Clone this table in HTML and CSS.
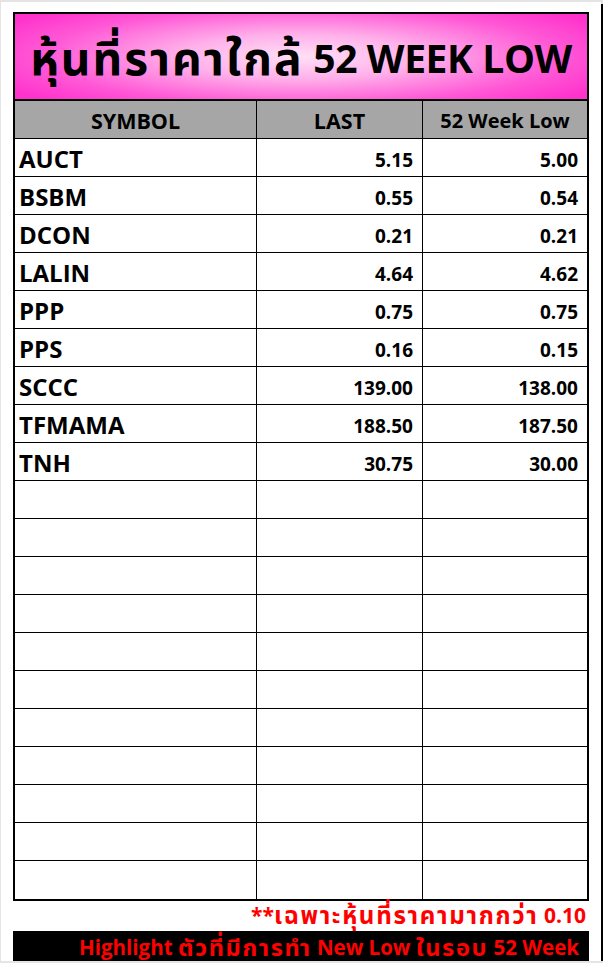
FILE: index.html
```html
<!DOCTYPE html>
<html lang="th">
<head>
<meta charset="utf-8">
<title>หุ้นที่ราคาใกล้ 52 WEEK LOW</title>
<link rel="stylesheet" href="styles.css">
</head>
<body>
<div class="canvas">
  <div class="sheet">
    <div class="title"><span class="th">หุ้นที่ราคาใกล้</span>&nbsp;52 WEEK LOW</div>
    <div class="grid">
      <div class="hd">SYMBOL</div>
      <div class="hd">LAST</div>
      <div class="hd hd-small">52 Week Low</div>

      <div class="sym">AUCT</div><div class="num">5.15</div><div class="num">5.00</div>
      <div class="sym">BSBM</div><div class="num">0.55</div><div class="num">0.54</div>
      <div class="sym">DCON</div><div class="num">0.21</div><div class="num">0.21</div>
      <div class="sym">LALIN</div><div class="num">4.64</div><div class="num">4.62</div>
      <div class="sym">PPP</div><div class="num">0.75</div><div class="num">0.75</div>
      <div class="sym">PPS</div><div class="num">0.16</div><div class="num">0.15</div>
      <div class="sym">SCCC</div><div class="num">139.00</div><div class="num">138.00</div>
      <div class="sym">TFMAMA</div><div class="num">188.50</div><div class="num">187.50</div>
      <div class="sym">TNH</div><div class="num">30.75</div><div class="num">30.00</div>

      <div class="sym"></div><div class="num"></div><div class="num"></div>
      <div class="sym"></div><div class="num"></div><div class="num"></div>
      <div class="sym"></div><div class="num"></div><div class="num"></div>
      <div class="sym"></div><div class="num"></div><div class="num"></div>
      <div class="sym"></div><div class="num"></div><div class="num"></div>
      <div class="sym"></div><div class="num"></div><div class="num"></div>
      <div class="sym"></div><div class="num"></div><div class="num"></div>
      <div class="sym"></div><div class="num"></div><div class="num"></div>
      <div class="sym"></div><div class="num"></div><div class="num"></div>
      <div class="sym"></div><div class="num"></div><div class="num"></div>
      <div class="sym last"></div><div class="num last"></div><div class="num last"></div>
    </div>
    <div class="note">**<span class="th">เฉพาะหุ้นที่ราคามากกว่า</span>&nbsp;0.10</div>
    <div class="bar">Highlight&nbsp;<span class="th">ตัวที่มีการทำ</span>&nbsp;New Low&nbsp;<span class="th">ในรอบ</span>&nbsp;52 Week</div>
  </div>
</div>
</body>
</html>
```

FILE: styles.css
```css
html, body {
  margin: 0;
  padding: 0;
  background: #e4e4e4;
}
body {
  font-family: "Open Sans", "Noto Sans", "Noto Sans Thai", sans-serif;
  font-weight: 700;
  color: #000;
}
.canvas {
  margin: 2px 0 0 1px;
  width: 600px;
  height: 959px;
  background: #fff;
  box-shadow: 2px 2px 0 #000;
  box-sizing: border-box;
  padding: 10px 0 0 12px;
}
.sheet {
  width: 576px;
  display: flex;
  flex-direction: column;
}
.th {
  font-size: 1.15em;
  letter-spacing: 0.07em;
  line-height: 1;
}
.title {
  height: 83px;
  border: 2px solid #000;
  background: radial-gradient(ellipse 60% 75% at 50% 50%, #ffe0f6 0%, #ffb0ea 35%, #ff58d6 75%, #ff33cc 100%);
  display: flex;
  align-items: center;
  justify-content: center;
  font-size: 39px;
  line-height: 1;
  padding-top: 2px;
  box-sizing: content-box;
  white-space: nowrap;
  letter-spacing: -0.4px;
}
.title .th {
  font-size: 1.18em;
  letter-spacing: 2px;
}
.grid {
  display: grid;
  grid-template-columns: 242px 166px 164px;
  grid-auto-rows: 38px;
  border: 2px solid #000;
  border-top: 0;
}
.grid > div {
  border-right: 1px solid #000;
  border-bottom: 1px solid #000;
  display: flex;
  align-items: center;
  white-space: nowrap;
}
.grid > div:nth-child(3n) {
  border-right: 0;
}
.grid > .last {
  border-bottom: 0;
}
.hd {
  background: #a6a6a6;
  justify-content: center;
  font-size: 21.5px;
  padding-top: 2px;
}
.hd-small {
  font-size: 20px;
}
.sym {
  font-size: 24px;
  padding-left: 4px;
  padding-top: 2px;
}
.num {
  justify-content: flex-end;
  font-size: 19px;
  padding-right: 9px;
  padding-top: 4px;
}
.note {
  height: 30px;
  display: flex;
  align-items: center;
  justify-content: flex-end;
  color: #ff0000;
  font-size: 21px;
  line-height: 1;
  padding-right: 3px;
  padding-bottom: 2px;
  box-sizing: border-box;
  white-space: nowrap;
}
.bar {
  height: 30px;
  background: #000;
  color: #ff0000;
  display: flex;
  align-items: center;
  justify-content: flex-end;
  font-size: 20.5px;
  line-height: 1;
  padding-right: 10px;
  padding-top: 3px;
  box-sizing: border-box;
  white-space: nowrap;
}
```
